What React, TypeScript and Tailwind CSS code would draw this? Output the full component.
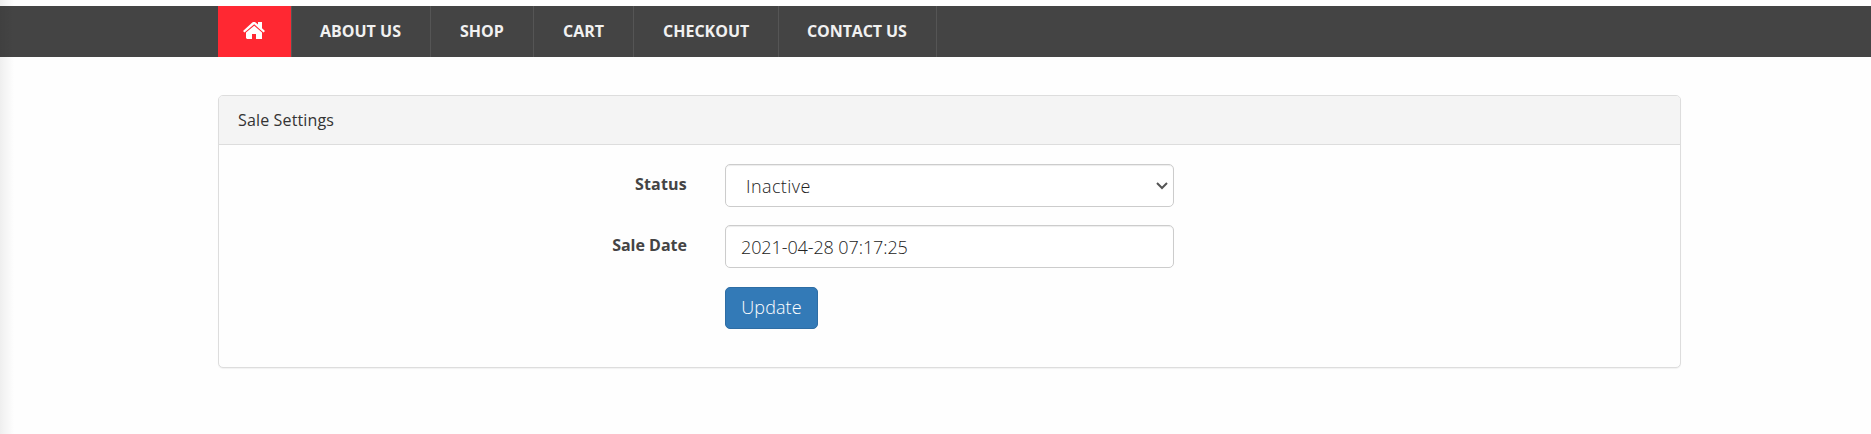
const links = [
  { label: 'ABOUT US', style: 'w-[139px] pl-7' },
  { label: 'SHOP', style: 'w-[103px] pl-[29px]' },
  { label: 'CART', style: 'w-[100px] pl-[29px]' },
  { label: 'CHECKOUT', style: 'w-[145px] pl-[29px]' },
  { label: 'CONTACT US', style: 'w-[158px] pl-7 tracking-[-0.1px]' },
];

function HomeIcon() {
  return (
    <svg width="22" height="17" viewBox="0 0 22 17" fill="#fff" aria-hidden="true">
      <path d="M10 0h2l3 2.4V0H19v6.2l3 2.9-1.5 1.4L11.2 2.2 1.5 10.5 0 9 9 .7Z" />
      <path d="M11.2 3.7 19 10.4V17h-6v-5H9v5H4l-1-1v-5.5Z" />
    </svg>
  );
}

function Navbar() {
  return (
    <nav className="mt-1.5 flex h-[51px] bg-[#444] pl-[218px]">
      <a className="flex w-[74px] items-center justify-center border-r border-[#555] bg-[#ff2832] pb-0.5 pr-px">
        <HomeIcon />
      </a>
      {links.map((link) => (
        <a
          key={link.label}
          className={`${link.style} flex items-center whitespace-nowrap border-r border-[#555] pb-px text-base font-bold text-[#f1f1f1]`}
        >
          {link.label}
        </a>
      ))}
    </nav>
  );
}

const field =
  'flex h-[43px] w-[449px] items-center rounded-[5px] border border-[#ccc] bg-white text-lg font-light text-[#222] shadow-[inset_0_1px_1px_rgba(0,0,0,0.075)]';

export default function App() {
  return (
    <div className="relative flex h-[434px] flex-col overflow-hidden bg-[#fefefe] font-['Open_Sans','Noto_Sans',sans-serif]">
      <Navbar />
      <main className="ml-[218px] mt-[38px] h-[273px] w-[1463px] overflow-hidden rounded-[5px] border border-[#ddd] bg-[#fefefe] shadow-[0_1px_1px_rgba(0,0,0,0.05)]">
        <header className="flex h-[49px] items-center border-b border-[#ddd] bg-[#f4f4f4] pl-[19px] text-base tracking-[0.15px] text-[#333]">
          Sale Settings
        </header>
        <form className="grid grid-cols-[468px_449px] gap-x-[38px] pt-[19px]">
          <label className="pt-2 text-right text-base font-bold tracking-[0.2px] text-[#444]">Status</label>
          <div className={`${field} justify-between pl-5 pr-[5px]`}>
            <span className="tracking-[0.4px]">Inactive</span>
            <svg width="12" height="8" viewBox="0 0 12 8" fill="none" stroke="#555" strokeWidth="2" aria-hidden="true">
              <path d="m1 1 5 5 5-5" />
            </svg>
          </div>
          <label className="mt-[18px] pt-2 text-right text-base font-bold text-[#444]">Sale Date</label>
          <div className={`${field} mt-[18px] pl-[15px] tracking-[-0.1px]`}>2021-04-28 07:17:25</div>
          <button
            type="button"
            className="col-start-2 mt-[19px] flex h-[42px] w-[93px] items-center justify-center rounded-[5px] border border-[#2e6da4] bg-[#337ab7] pb-0.5 text-lg font-light tracking-[0.1px] text-white"
          >
            Update
          </button>
        </form>
      </main>
      <div className="pointer-events-none absolute inset-y-0 left-0 w-[14px] bg-linear-to-r from-black/6 to-transparent" />
    </div>
  );
}
